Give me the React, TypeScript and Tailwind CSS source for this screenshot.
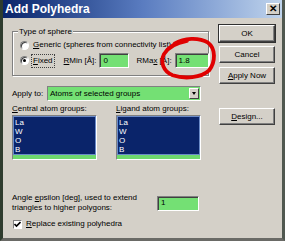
import React from "react";

const Btn = ({ children, def }: { children: React.ReactNode; def?: boolean }) => (
  <div
    className={
      "h-[17px] w-full flex items-center justify-center whitespace-nowrap bg-[#d4d0c8] border border-t-white border-l-white border-r-[#404040] border-b-[#404040] shadow-[inset_-1px_-1px_0_#808080] " +
      (def ? "outline outline-1 outline-[#303030]" : "")
    }
  >
    {children}
  </div>
);

const Radio = ({ on }: { on?: boolean }) => (
  <div className="shrink-0 w-[9px] h-[9px] rounded-full bg-white border border-t-[#808080] border-l-[#808080] border-r-white border-b-white shadow-[inset_1px_1px_0_#404040] flex items-center justify-center">
    {on && <div className="w-[3px] h-[3px] rounded-full bg-black" />}
  </div>
);

const Field = ({ w, v }: { w: string; v: string }) => (
  <div
    className={
      w +
      " shrink-0 h-[15px] bg-[#74e074] border border-t-[#808080] border-l-[#808080] border-r-white border-b-white shadow-[inset_1px_1px_0_#404040] flex items-center pl-[3px] text-[8px]"
    }
  >
    {v}
  </div>
);

const ListBox = () => (
  <div className="h-[45px] w-[85px] border border-t-[#808080] border-l-[#808080] border-r-white border-b-white flex flex-col">
    <div className="flex-1 bg-[#0a246a] border border-[#6a8ac8] text-white leading-[9px] pl-[1px] pt-[1px] flex flex-col">
      <span>La</span>
      <span>W</span>
      <span>O</span>
      <span>B</span>
    </div>
    <div className="h-[4px] bg-[#6ed86e]" />
  </div>
);

export default function App() {
  return (
    <div
      className="relative w-[285px] h-[241px] overflow-hidden bg-[#d4d0c8] text-[8px] text-black flex flex-col border-l-[3px] border-r-[3px] border-b-[3px] border-l-[#2e3c2e] border-r-[#505850] border-b-[#6a6a66]"
      style={{ fontFamily: '"Liberation Sans", Arial, sans-serif' }}
    >
      {/* title bar */}
      <div className="h-[18px] flex items-center bg-gradient-to-r from-[#0a246a] via-[#5a7cc0] to-[#c0d4ec] pl-[2px] pr-[2px]">
        <span className="text-white font-bold text-[12px] leading-none">Add Polyhedra</span>
        <div className="ml-auto w-[14px] h-[12px] bg-[#d4d0c8] border border-t-white border-l-white border-r-[#404040] border-b-[#404040] flex items-center justify-center text-[10px] font-bold leading-none">
          ✕
        </div>
      </div>

      <div className="flex flex-1 pl-[9px] pr-[5px] pt-[7px]">
        {/* left column */}
        <div className="w-[197px] flex flex-col whitespace-nowrap">
          {/* group box */}
          <div className="relative mt-[6px] h-[45px] border border-[#808080] shadow-[1px_1px_0_white,inset_1px_1px_0_white] px-[7px] pt-[8px]">
            <span className="absolute -top-[6px] left-[5px] bg-[#d4d0c8] px-[1px]">Type of sphere</span>
            <div className="flex items-center gap-[4px] h-[10px]">
              <Radio />
              <span>
                <u>G</u>eneric (spheres from connectivity list)
              </span>
            </div>
            <div className="flex items-center mt-[3px] h-[15px]">
              <Radio on />
              <span className="ml-[2px] px-[1px] border border-dotted border-[#404040]">
                <u>F</u>ixed
              </span>
              <span className="ml-[9px]">
                <u>R</u>Min [Å]:
              </span>
              <div className="ml-[3px]">
                <Field w="w-[30px]" v="0" />
              </div>
              <span className="ml-[7px]">
                RMa<u>x</u> [Å]:
              </span>
              <div className="ml-[3px]">
                <Field w="w-[34px]" v="1.8" />
              </div>
            </div>
          </div>

          {/* apply to */}
          <div className="flex items-center mt-[10px] h-[15px]">
            <span className="w-[35px]">Apply to:</span>
            <div className="w-[154px] h-[15px] bg-[#74e074] border border-t-[#808080] border-l-[#808080] border-r-white border-b-white flex items-center pl-[2px]">
              <span>Atoms of selected groups</span>
              <div className="ml-auto mr-[1px] w-[10px] h-[11px] bg-[#d4d0c8] border border-t-white border-l-white border-r-[#404040] border-b-[#404040] flex items-center justify-center">
                <div className="w-0 h-0 border-l-[2.5px] border-r-[2.5px] border-t-[3px] border-l-transparent border-r-transparent border-t-black" />
              </div>
            </div>
          </div>

          {/* lists */}
          <div className="flex gap-[19px] mt-[3px]">
            <div className="flex flex-col">
              <span className="leading-[10px]">
                <u>C</u>entral atom groups:
              </span>
              <div className="mt-[1px]">
                <ListBox />
              </div>
            </div>
            <div className="flex flex-col">
              <span className="leading-[10px]">
                <u>L</u>igand atom groups:
              </span>
              <div className="mt-[1px]">
                <ListBox />
              </div>
            </div>
          </div>

          {/* angle */}
          <div className="flex items-center mt-[33px]">
            <div className="w-[145px] leading-[10px]">
              Angle <u>e</u>psilon [deg], used to extend
              <br />
              triangles to higher polygons:
            </div>
            <Field w="w-[42px]" v="1" />
          </div>

          {/* checkbox */}
          <div className="flex items-center gap-[4px] mt-[5px] ml-[1px]">
            <div className="w-[9px] h-[9px] bg-white border border-t-[#808080] border-l-[#808080] border-r-white border-b-white flex items-center justify-center">
              <svg width="7" height="7" viewBox="0 0 7 7">
                <path d="M0.5 3 L2.5 5 L6.5 1" stroke="#000" strokeWidth="1.6" fill="none" />
              </svg>
            </div>
            <span>
              <u>R</u>eplace existing polyhedra
            </span>
          </div>
        </div>

        {/* right column */}
        <div className="ml-[10px] w-[56px] flex flex-col">
          <Btn def>OK</Btn>
          <div className="mt-[4px]">
            <Btn>Cancel</Btn>
          </div>
          <div className="mt-[4px]">
            <Btn>
              <span>
                <u>A</u>pply Now
              </span>
            </Btn>
          </div>
          <div className="mt-[24px]">
            <Btn>
              <span>
                <u>D</u>esign...
              </span>
            </Btn>
          </div>
        </div>
      </div>

      {/* red hand-drawn circle */}
      <svg className="absolute left-[152px] top-[35px] pointer-events-none" width="64" height="46" viewBox="0 0 66 48">
        <path
          d="M20 9 C30 3 45 2 55 8 C63 14 63 28 56 37 C48 45 30 46 18 42 C8 38 5 28 9 20 C13 13 22 8 33 6"
          stroke="#e00000"
          strokeWidth="4"
          fill="none"
          strokeLinecap="round"
        />
      </svg>
    </div>
  );
}
